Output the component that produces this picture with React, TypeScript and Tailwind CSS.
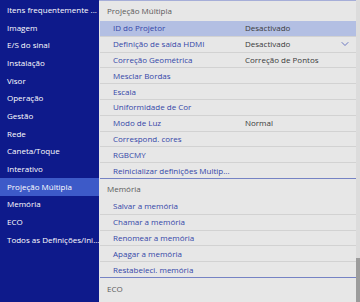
import { ChevronDown } from "lucide-react";

const MENU = [
  "Itens frequentemente ...",
  "Imagem",
  "E/S do sinal",
  "Instalação",
  "Visor",
  "Operação",
  "Gestão",
  "Rede",
  "Caneta/Toque",
  "Interativo",
  "Projeção Múltipla",
  "Memória",
  "ECO",
  "Todos as Definições/Ini...",
];

const ACTIVE = "Projeção Múltipla";

type Row = { label: string; value?: string; select?: boolean; selected?: boolean };

const MULTI: Row[] = [
  { label: "ID do Projetor", value: "Desactivado", selected: true },
  { label: "Definição de saída HDMI", value: "Desactivado", select: true },
  { label: "Correção Geométrica", value: "Correção de Pontos" },
  { label: "Mesclar Bordas" },
  { label: "Escala" },
  { label: "Uniformidade de Cor" },
  { label: "Modo de Luz", value: "Normal" },
  { label: "Correspond. cores" },
  { label: "RGBCMY" },
  { label: "Reinicializar definições Multip..." },
];

const MEMORY: Row[] = [
  { label: "Salvar a memória" },
  { label: "Chamar a memória" },
  { label: "Renomear a memória" },
  { label: "Apagar a memória" },
  { label: "Restabeleci. memória" },
];

function SettingRow({ row, last }: { row: Row; last?: boolean }) {
  return (
    <div
      className={`flex h-[15.8px] items-center pl-[13px] pr-[5px] ${
        row.selected ? "bg-[#b3bfe3]" : ""
      } ${last ? "border-b border-[#7683c4]" : "border-b border-[#d2d2d2]"}`}
    >
      <span className={`whitespace-nowrap text-[#3446a8] ${row.value ? "w-[132px] shrink-0" : "flex-1"}`}>
        {row.label}
      </span>
      {row.value && <span className="flex-1 whitespace-nowrap text-[#3a3a3a]">{row.value}</span>}
      {row.select && <ChevronDown size={12} strokeWidth={1.6} className="text-[#4a5bb8]" />}
    </div>
  );
}

function Section({ title, rows }: { title: string; rows: Row[] }) {
  return (
    <div>
      <div className="flex h-[20px] items-center pl-[7px] text-[#5a5a5a]">{title}</div>
      {rows.map((r, i) => (
        <SettingRow key={r.label} row={r} last={i === rows.length - 1} />
      ))}
    </div>
  );
}

export default function App() {
  return (
    <div
      className="flex h-[302px] w-[360px] overflow-hidden text-[8px] leading-none"
      style={{ fontFamily: '"Open Sans", "Noto Sans", sans-serif' }}
    >
      <div className="flex w-[99px] shrink-0 flex-col bg-[#0e1a8b] pt-[1px]">
        {MENU.map((item) => (
          <div
            key={item}
            className={`flex h-[17.7px] shrink-0 items-center pl-[7px] text-white ${
              item === ACTIVE ? "bg-[#3d5ac8]" : ""
            }`}
          >
            <span className="whitespace-nowrap">{item}</span>
          </div>
        ))}
      </div>

      <div className="flex min-w-0 flex-1 flex-col border-t border-[#a6aed8] bg-[#e7e7e7] pl-[1px]">
        <Section title="Projeção Múltipla" rows={MULTI} />
        <Section title="Memória" rows={MEMORY} />
        <div className="flex h-[22px] items-center pl-[7px] text-[#5a5a5a]">ECO</div>
      </div>

      <div className="flex w-[4px] shrink-0 flex-col bg-[#dcdcdc]">
        <div className="mt-[258px] flex-1 bg-[#9c9c9c]" />
      </div>
    </div>
  );
}
